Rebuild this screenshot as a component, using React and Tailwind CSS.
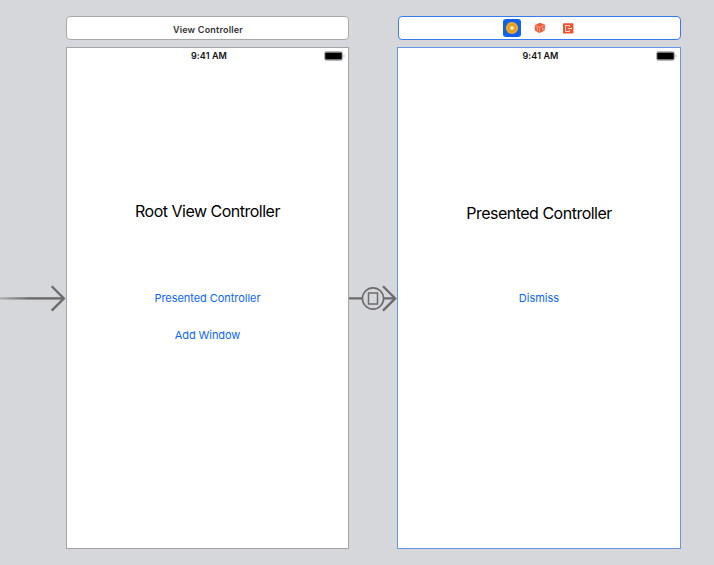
function Battery() {
  return (
    <svg className="block" width="22" height="10" viewBox="0 0 22 10">
      <rect x="0.5" y="0.5" width="18" height="9" rx="1.8" fill="#e8e8e8" stroke="#b4b4b4" />
      <rect x="1.2" y="1.4" width="16.6" height="7.2" rx="0.8" fill="#000" />
      <path d="M19.6 3.4c1.2.4 1.2 2.8 0 3.2z" fill="#999" />
    </svg>
  );
}

function StatusBar() {
  return (
    <div className="grid h-[16px] grid-cols-[1fr_auto_1fr] items-center pr-[2px]">
      <span />
      <span className="pl-[5px] text-[9px] leading-[16px] font-semibold tracking-[0.1px] text-[#111]">9:41 AM</span>
      <span className="justify-self-end">
        <Battery />
      </span>
    </div>
  );
}

function EntryArrow() {
  return (
    <svg className="mt-[282px] block shrink-0" width="66" height="32" viewBox="0 0 66 32" fill="none">
      <defs>
        <linearGradient id="tail" x1="0" y1="0" x2="66" y2="0" gradientUnits="userSpaceOnUse">
          <stop offset="0" stopColor="#6b6b6b" stopOpacity="0.35" />
          <stop offset="0.45" stopColor="#6b6b6b" />
        </linearGradient>
      </defs>
      <rect x="0" y="15.2" width="64" height="2.4" fill="url(#tail)" />
      <path d="M51.7 4.2L63.9 16.4L51.7 28.6" stroke="#6b6b6b" strokeWidth="2.3" />
    </svg>
  );
}

function Segue() {
  return (
    <svg className="mt-[282px] block shrink-0" width="48" height="32" viewBox="0 0 48 32" fill="none" stroke="#6b6b6b">
      <path d="M0 16.4H13.5M34.5 16.4H46" strokeWidth="2.3" />
      <circle cx="24" cy="16.5" r="10.6" strokeWidth="1.6" />
      <rect x="19.5" y="11" width="9" height="11" strokeWidth="1.5" />
      <path d="M34 4.2L46.2 16.4L34 28.6" strokeWidth="2.3" />
    </svg>
  );
}

function SceneIcons() {
  return (
    <div className="flex h-full items-center pl-[104px]">
      <span className="flex h-[18px] w-[18px] items-center justify-center rounded-[3px] bg-[#1260ef]">
        <svg width="14" height="14" viewBox="0 0 14 14">
          <circle cx="7" cy="7" r="6.1" fill="#f0aa1f" />
          <circle cx="7" cy="7" r="3.6" fill="#f3b132" stroke="#d18f18" strokeWidth="0.7" />
          <rect x="5.8" y="5.8" width="2.4" height="2.4" rx="0.5" fill="#fff" />
        </svg>
      </span>
      <svg className="ml-[13px]" width="12" height="12" viewBox="0 0 12 12">
        <path d="M.7 3.3L5.8.8l5.5 2L10.6 8.5 5.4 11.3.9 8.5z" fill="#ef5835" />
        <path d="M.7 3.6l4.9 1.6 5.6-2.2M5.6 5.2v6" fill="none" stroke="#ffd5ca" strokeWidth="0.6" />
        <path d="M2.5 6.1l1-.1v2.8M7.8 6.3l1.2-.5v2.8" fill="none" stroke="#ffe3db" strokeWidth="0.6" />
      </svg>
      <svg className="ml-[17px]" width="11" height="11" viewBox="0 0 11 11">
        <rect x="0" y="0.2" width="10.4" height="10.4" rx="0.6" fill="#f05432" />
        <path d="M6.5 3.9V2.5H2.5v6h4V7.1M5 5.5h4" fill="none" stroke="#ffe6df" strokeWidth="0.9" />
        <path d="M7.8 4.4l1.3 1.1-1.3 1.1z" fill="#ffe6df" />
      </svg>
    </div>
  );
}

export default function App() {
  return (
    <main className="flex h-[565px] w-[714px] overflow-hidden bg-[#d6d7db] font-['Inter','Liberation_Sans',sans-serif]">
      <EntryArrow />
      <section className="flex w-[283px] shrink-0 flex-col pt-[16px]">
        <header className="h-[24px] rounded-[4px] border border-[#a8a8a8] bg-white pl-[1px] text-center text-[9px] leading-[25px] font-semibold tracking-[0.2px] text-[#333]">
          View Controller
        </header>
        <div className="mt-[7px] h-[502px] border border-[#a4a4a4] bg-white text-center">
          <StatusBar />
          <h1 className="mt-[135px] text-[16px] leading-[24px] tracking-[-0.5px] text-[#000]">Root View Controller</h1>
          <p className="mt-[67px] text-[11px] leading-[16px] tracking-[-0.05px] text-[#0a66ff]">Presented Controller</p>
          <p className="mt-[21px] text-[11px] leading-[16px] tracking-[-0.1px] text-[#0a66ff]">Add Window</p>
        </div>
      </section>
      <Segue />
      <section className="flex w-[284px] shrink-0 flex-col pt-[16px]">
        <header className="ml-[1px] h-[24px] rounded-[4px] border border-[#387bf0] bg-white">
          <SceneIcons />
        </header>
        <div className="mt-[7px] h-[502px] border border-[#6496e8] bg-white text-center">
          <StatusBar />
          <h1 className="mt-[137px] text-[16px] leading-[24px] tracking-[-0.5px] text-[#000]">Presented Controller</h1>
          <p className="mt-[65px] text-[11px] leading-[16px] text-[#0a66ff]">Dismiss</p>
        </div>
      </section>
    </main>
  );
}
